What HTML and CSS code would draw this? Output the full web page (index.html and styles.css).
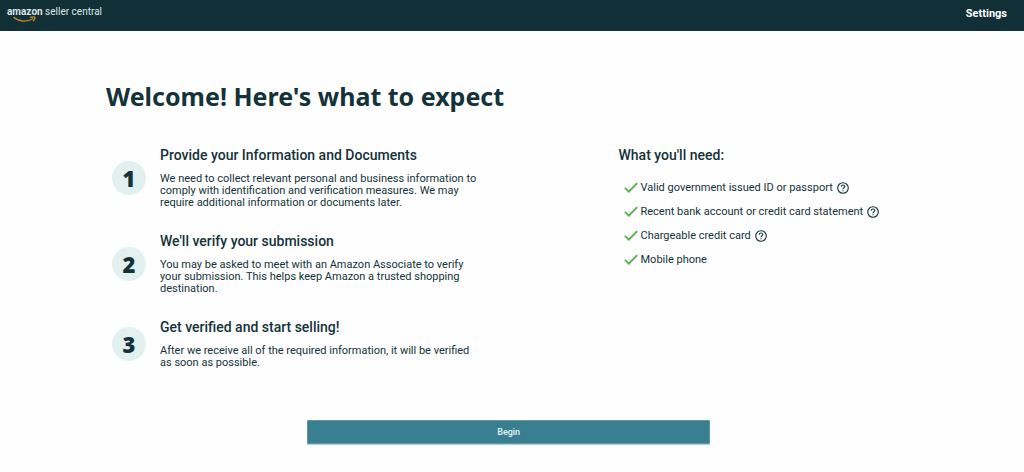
FILE: index.html
```html
<!DOCTYPE html>
<html lang="en">
<head>
<meta charset="utf-8">
<meta name="viewport" content="width=device-width, initial-scale=1">
<title>Amazon Seller Central</title>
<link rel="stylesheet" href="styles.css">
</head>
<body>
<header class="topbar">
  <a class="brand" href="#">
    <span class="brand-name"><b>amazon</b> seller central</span>
    <svg class="smile" viewBox="0 0 26 7" aria-hidden="true"><path d="M3 1.5C8 5.8 16 6.2 22 2.8M19.5 1.4C22 .8 24.2.7 24 1.5c0 1.2-.7 2.5-1.5 3.3" fill="none" stroke="#c8862c" stroke-width="1.3" stroke-linecap="round"/></svg>
  </a>
  <a class="settings" href="#">Settings</a>
</header>
<main class="page">
  <h1 class="title">Welcome! Here's what to expect</h1>
  <div class="columns">
    <ol class="steps">
      <li class="step">
        <span class="number">1</span>
        <div class="step-body">
          <h2 class="heading">Provide your Information and Documents</h2>
          <p class="text">We need to collect relevant personal and business information to<br>comply with identification and verification measures. We may<br>require additional information or documents later.</p>
        </div>
      </li>
      <li class="step">
        <span class="number">2</span>
        <div class="step-body">
          <h2 class="heading">We'll verify your submission</h2>
          <p class="text">You may be asked to meet with an Amazon Associate to verify<br>your submission. This helps keep Amazon a trusted shopping<br>destination.</p>
        </div>
      </li>
      <li class="step">
        <span class="number">3</span>
        <div class="step-body">
          <h2 class="heading">Get verified and start selling!</h2>
          <p class="text">After we receive all of the required information, it will be verified<br>as soon as possible.</p>
        </div>
      </li>
    </ol>
    <section class="needs">
      <h2 class="heading">What you'll need:</h2>
      <ul class="checklist">
        <li class="item">
          <svg class="check" viewBox="0 0 14 12" aria-hidden="true"><path d="M.8 5.8 4.8 9.7 13.2 1.2"/></svg>
          <span>Valid government issued ID or passport</span>
          <button class="help" type="button" aria-label="About ID or passport"><svg viewBox="0 0 12 12" aria-hidden="true"><circle cx="6" cy="6" r="5.3"/><path d="M4.3 4.8C4.3 2.5 7.8 2.5 7.8 4.6 7.8 5.8 6 5.8 6 7.2M6 8.3v1"/></svg></button>
        </li>
        <li class="item">
          <svg class="check" viewBox="0 0 14 12" aria-hidden="true"><path d="M.8 5.8 4.8 9.7 13.2 1.2"/></svg>
          <span>Recent bank account or credit card statement</span>
          <button class="help" type="button" aria-label="About account statements"><svg viewBox="0 0 12 12" aria-hidden="true"><circle cx="6" cy="6" r="5.3"/><path d="M4.3 4.8C4.3 2.5 7.8 2.5 7.8 4.6 7.8 5.8 6 5.8 6 7.2M6 8.3v1"/></svg></button>
        </li>
        <li class="item">
          <svg class="check" viewBox="0 0 14 12" aria-hidden="true"><path d="M.8 5.8 4.8 9.7 13.2 1.2"/></svg>
          <span>Chargeable credit card</span>
          <button class="help" type="button" aria-label="About chargeable cards"><svg viewBox="0 0 12 12" aria-hidden="true"><circle cx="6" cy="6" r="5.3"/><path d="M4.3 4.8C4.3 2.5 7.8 2.5 7.8 4.6 7.8 5.8 6 5.8 6 7.2M6 8.3v1"/></svg></button>
        </li>
        <li class="item">
          <svg class="check" viewBox="0 0 14 12" aria-hidden="true"><path d="M.8 5.8 4.8 9.7 13.2 1.2"/></svg>
          <span>Mobile phone</span>
        </li>
      </ul>
    </section>
  </div>
  <button class="begin" type="button">Begin</button>
</main>
</body>
</html>
```
FILE: styles.css
```css
* { box-sizing: border-box; }
body {
  margin: 0;
  background: #fefefe;
  color: #14323a;
  font-family: Roboto, "Noto Sans", sans-serif;
  font-size: 11px;
}
.topbar {
  display: flex;
  justify-content: space-between;
  align-items: flex-start;
  height: 31px;
  padding: 5px 17px 0 7px;
  background: #112f36;
}
.brand {
  display: flex;
  flex-direction: column;
  color: #dfe6e7;
  text-decoration: none;
}
.brand-name {
  font-size: 10px;
  line-height: 14px;
}
.smile {
  width: 26px;
  height: 7px;
  margin: -3px 0 0 4px;
}
.settings {
  color: #fff;
  font-weight: 700;
  line-height: 18px;
  text-decoration: none;
}
.page {
  display: flex;
  flex-direction: column;
  padding: 47px 11% 28px 106px;
}
.title {
  margin: 0;
  font-family: "Noto Sans", sans-serif;
  font-size: 25px;
  line-height: 36px;
  font-weight: 700;
}
.columns {
  display: grid;
  grid-template-columns: 7fr 4fr;
  margin-top: 33px;
}
.steps, .checklist {
  margin: 0;
  padding: 0;
  list-style: none;
}
.steps {
  display: flex;
  flex-direction: column;
  gap: 24px;
}
.step {
  display: flex;
  align-items: center;
  gap: 14px;
  padding-left: 6px;
}
.number {
  display: grid;
  place-items: center;
  flex: none;
  width: 34px;
  height: 34px;
  border-radius: 50%;
  background: #e2f0f0;
  font-family: "Noto Sans", sans-serif;
  font-size: 22px;
  line-height: 30px;
  font-weight: 900;
}
.heading {
  margin: 0;
  font-size: 14px;
  line-height: 16px;
  font-weight: 500;
}
.text {
  margin: 10px 0 0;
  line-height: 12px;
}
.checklist {
  display: flex;
  flex-direction: column;
  gap: 8px;
  padding: 17px 0 0 5px;
}
.item {
  display: flex;
  align-items: center;
  height: 16px;
  line-height: 16px;
  white-space: nowrap;
}
.check {
  width: 14px;
  height: 12px;
  margin-right: 3px;
  fill: none;
  stroke: #54b34c;
  stroke-width: 1.8;
}
.help {
  display: flex;
  margin-left: 4px;
  padding: 0;
  border: 0;
  background: none;
  color: inherit;
}
.help svg {
  width: 12px;
  height: 12px;
  fill: none;
  stroke: currentColor;
  stroke-width: 1.1;
}
.begin {
  align-self: center;
  width: 50%;
  height: 24px;
  margin-top: 51px;
  padding: 0;
  border: 1px solid #62969f;
  border-radius: 1px;
  background: #388091;
  box-shadow: 0 1px 1px #b9c6cb;
  color: #e8f3f5;
  font: 500 9px/22px Roboto, sans-serif;
}
```
